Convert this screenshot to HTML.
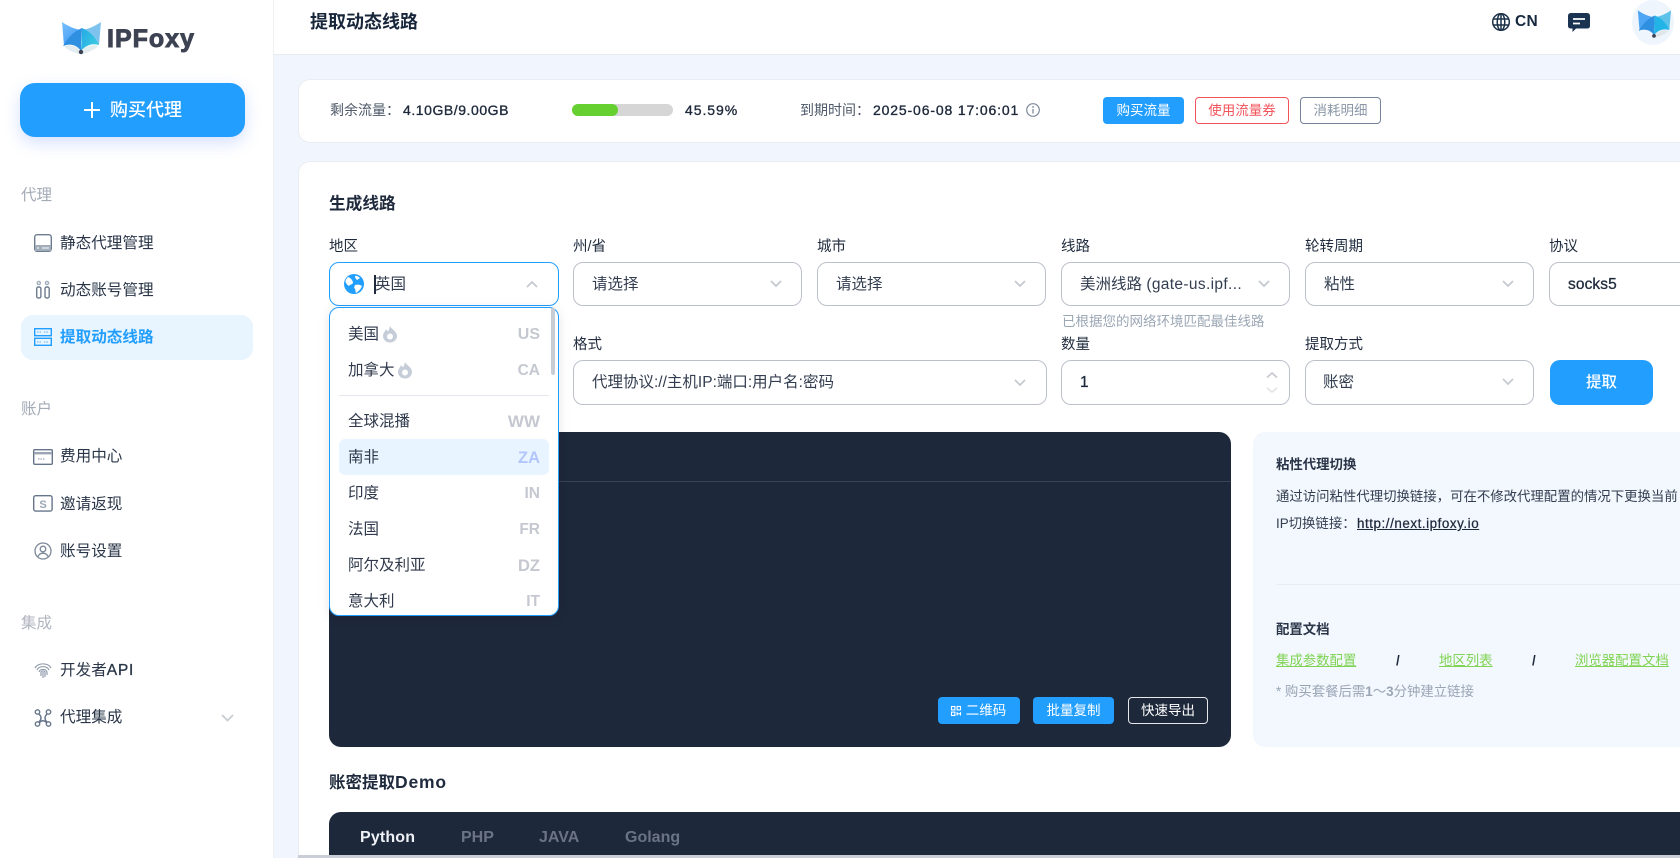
<!DOCTYPE html>
<html lang="zh-CN"><head><meta charset="utf-8"><title>IPFoxy</title>
<style>
*{box-sizing:border-box}
html,body{margin:0;padding:0;width:1680px;height:858px;overflow:hidden;background:#f1f6fe}
body{position:relative;font-family:"Liberation Sans","Noto Sans CJK SC",sans-serif;color:#1e293b}
.a{position:absolute}
.t{position:absolute;white-space:nowrap;line-height:20px;height:20px}
.nav{font-size:15.6px;color:#2a3648;left:60px}
.sec{font-size:15.5px;color:#a3abb6;left:21px}
.lab{font-size:14.5px;color:#1f2b3d}
.inp{position:absolute;background:#fff;border:1px solid #bcc0cb;border-radius:10px;height:44px;width:230px;top:262px}
.val{font-size:15.5px;color:#333e50}
.num{letter-spacing:.95px;font-weight:400;-webkit-text-stroke:.35px #1e293b;color:#1e293b;font-size:14px}
.btn{position:absolute;border-radius:4px;font-size:13.5px;text-align:center;line-height:25px}
.it{font-size:15.5px;color:#303a4c;left:348px}
.cd{font-size:15.5px;font-weight:700;color:#c5c8d0;right:1140px;text-align:right}
.pt{font-size:13.4px;color:#333e50}
.g{font-size:13.4px;color:#7fd453;text-decoration:underline}
svg{position:absolute;overflow:visible}
</style></head><body>

<!-- sidebar -->
<div class="a" style="left:0;top:0;width:274px;height:858px;background:#fff;border-right:1px solid #eef0f4"></div>

<svg style="left:61px;top:21px" width="40" height="34" viewBox="0 0 40 34">
<defs><linearGradient id="lg1" x1="0" y1="0" x2="0.6" y2="1"><stop offset="0" stop-color="#7cc0ff"/><stop offset="1" stop-color="#3f9af2"/></linearGradient>
<linearGradient id="lg2" x1="0" y1="0" x2="1" y2="0.6"><stop offset="0" stop-color="#23a8e8"/><stop offset="1" stop-color="#3bcbe0"/></linearGradient></defs>
<path d="M1 1C7 5 13 8 20 9L3 25Z" fill="url(#lg1)"/>
<path d="M40 1C34 5 28 8 21 9L38 24Z" fill="#7dc3ee"/>
<path d="M2 25C8 15 14 10 21 7L20 21L20 30C16 24 9 22 2 25Z" fill="#2f8fe0"/>
<path d="M21 7C28 10 34 15 38 24C31 22 25 24 20 30Z" fill="url(#lg2)"/>
<path d="M3 25C9 23 16 25 20 30C24 25 31 23 37 25C35 28 28 31 22 33H18C12 31 6 29 3 25Z" fill="#e3edf0"/>
<circle cx="20" cy="31" r="2.2" fill="#3a4252"/>
</svg>
<div class="t" style="left:107px;top:27px;font-size:25px;line-height:24px;height:24px;font-weight:700;color:#3d4352;letter-spacing:1px;-webkit-text-stroke:.9px #3d4352">IPFoxy</div>

<div class="a" style="left:20px;top:83px;width:225px;height:54px;background:#229eff;border-radius:15px;box-shadow:0 6px 16px rgba(70,120,255,.22)"></div>
<svg style="left:84px;top:102px" width="16" height="16"><path d="M8 0V16M0 8H16" stroke="#fff" stroke-width="2"/></svg>
<div class="t" style="left:110px;top:100px;font-size:18px;color:#fff;font-weight:500">购买代理</div>

<div class="t sec" style="top:186px">代理</div>
<svg style="left:34px;top:234px" width="18" height="18" fill="none"><rect x=".7" y=".7" width="16.6" height="16.6" rx="2.5" stroke="#6d7c90" stroke-width="1.4"/><rect x="1" y="11" width="16" height="6" fill="#a3aebb"/><path d="M3 14h2M8 14h7" stroke="#fff" stroke-width="1.1"/></svg>
<div class="t nav" style="top:234px">静态代理管理</div>
<svg style="left:36px;top:281px" width="14" height="18" fill="none" stroke="#6d7c90" stroke-width="1.4"><circle cx="2.8" cy="2" r="1.6" stroke="#a3aebb"/><circle cx="11" cy="2" r="1.6" stroke="#a3aebb"/><rect x=".7" y="6" width="4.2" height="11" rx="1.8"/><rect x="9" y="6" width="4.2" height="11" rx="1.8"/></svg>
<div class="t nav" style="top:281px">动态账号管理</div>
<div class="a" style="left:21px;top:315px;width:232px;height:45px;background:#e8f4fe;border-radius:12px"></div>
<svg style="left:34px;top:328px" width="18" height="18" fill="none"><rect x=".7" y=".7" width="16.6" height="7" stroke="#229eff" stroke-width="1.4"/><rect x=".7" y="10.3" width="16.6" height="7" stroke="#229eff" stroke-width="1.4"/><path d="M3 4h5M10 4h5M3 14h5M10 14h5" stroke="#7cc4fb" stroke-width="1.3" stroke-dasharray="1.5 1"/></svg>
<div class="t nav" style="top:328px;color:#229eff;font-weight:700">提取动态线路</div>

<div class="t sec" style="top:400px">账户</div>
<svg style="left:33px;top:449px" width="20" height="16" fill="none"><rect x=".7" y=".7" width="18.6" height="14.6" rx="1" stroke="#66758a" stroke-width="1.4"/><rect x="1" y="3" width="18" height="2.4" fill="#9aa6b5"/><path d="M5 10h7" stroke="#9aa6b5" stroke-width="1.2" stroke-dasharray="1.5 1"/></svg>
<div class="t nav" style="top:447px">费用中心</div>
<svg style="left:33px;top:495px" width="20" height="17" fill="none"><rect x=".7" y=".7" width="18.4" height="15.4" rx="2" stroke="#66758a" stroke-width="1.4"/><text x="10" y="13" font-size="11" font-weight="700" text-anchor="middle" fill="#9aa6b5" font-family="Liberation Sans">S</text></svg>
<div class="t nav" style="top:495px">邀请返现</div>
<svg style="left:34px;top:542px" width="18" height="18" fill="none" stroke="#7b8899" stroke-width="1.3"><circle cx="9" cy="9" r="8"/><circle cx="9" cy="7" r="2.8"/><path d="M3.8 14.8C5 12 7 11.2 9 11.2S13 12 14.2 14.8"/></svg>
<div class="t nav" style="top:542px">账号设置</div>

<div class="t sec" style="top:614px;color:#b0b6c0">集成</div>
<svg style="left:34px;top:661px" width="18" height="18" fill="none" stroke="#8995a5" stroke-width="1.1"><path d="M1 7C4 1.500 14 1.500 17 7"/><path d="M3 9C5 4.500 13 4.500 15 9"/><path d="M5 11C6 7.500 12 7.500 13 11V14"/><path d="M7 15V11C7.500 9.500 10.500 9.500 11 11V16"/><path d="M9 11V17"/></svg>
<div class="t nav" style="top:661px">开发者<span style="-webkit-text-stroke:.3px #2a3648;letter-spacing:.7px">API</span></div>
<svg style="left:34px;top:709px" width="18" height="18" fill="none" stroke="#66758a" stroke-width="1.4"><circle cx="3.500" cy="3" r="2.200"/><circle cx="14.500" cy="3" r="2.200"/><circle cx="3.500" cy="15" r="2.200"/><circle cx="14.500" cy="15" r="2.200"/><path d="M5 5Q9 9 5 13M13 5Q9 9 13 13M5.500 13.500Q9 10 12.500 13.500"/></svg>
<div class="t nav" style="top:708px">代理集成</div>
<svg style="left:221px;top:714px" width="13" height="8" fill="none"><path d="M1 1L6.500 6.500L12 1" stroke="#c8ccd3" stroke-width="1.800"/></svg>

<!-- topbar -->
<div class="a" style="left:274px;top:0;width:1406px;height:55px;background:#fff;border-bottom:1px solid #e8ebf0"></div>
<div class="t" style="left:310px;top:12px;font-size:18px;font-weight:700;color:#17263a">提取动态线路</div>
<svg style="left:1492px;top:13px" width="18" height="18" fill="none" stroke="#1b3048" stroke-width="1.500"><circle cx="9" cy="9" r="8.300"/><ellipse cx="9" cy="9" rx="3.800" ry="8.300"/><path d="M1 6H17M1 12H17M9 .7V17.300"/></svg>
<div class="t" style="left:1515px;top:12px;font-size:15.500px;font-weight:700;color:#16293f;letter-spacing:.3px">CN</div>
<svg style="left:1568px;top:13px" width="22" height="19"><path d="M3 0H19Q22 0 22 3V13Q22 15.500 19 15.500H8L4.500 19V15.500H3Q0 15.500 0 13V3Q0 0 3 0Z" fill="#1a3350"/><path d="M5 6H17M5 10.500H12" stroke="#fff" stroke-width="1.800"/></svg>
<div class="a" style="left:1632px;top:0;width:42px;height:45px;background:#eef5fd;border-radius:50%"></div>
<svg style="left:1637px;top:9px" width="34" height="30" viewBox="0 0 40 34">
<path d="M1 1C7 5 13 8 20 9L3 25Z" fill="#4ea6f5"/>
<path d="M40 1C34 5 28 8 21 9L38 24Z" fill="#5cc2ea"/>
<path d="M2 25C8 15 14 10 21 7L20 30C16 24 9 22 2 25Z" fill="#2f8fe0"/>
<path d="M21 7C28 10 34 15 38 24C31 22 25 24 20 30Z" fill="#22b4e6"/>
<path d="M22 29C26 25 31 23 37 25C34 29 28 31 22 33Z" fill="#dfe7ea"/>
<circle cx="20" cy="31" r="2.200" fill="#3a4252"/>
</svg>

<!-- info card -->
<div class="a" style="left:298px;top:79px;width:1400px;height:64px;background:#fff;border:1px solid #e9edf2;border-radius:12px"></div>
<div class="t" style="left:330px;top:100px;font-size:14px;color:#4d5868">剩余流量：</div>
<div class="t num" style="left:403px;top:100px;letter-spacing:.55px">4.10GB/9.00GB</div>
<div class="a" style="left:572px;top:104px;width:101px;height:12px;background:#d6d6d6;border-radius:6px"></div>
<div class="a" style="left:572px;top:104px;width:46px;height:12px;background:#67d031;border-radius:6px"></div>
<div class="t num" style="left:685px;top:100px">45.59%</div>
<div class="t" style="left:800px;top:100px;font-size:14px;color:#4d5868">到期时间：</div>
<div class="t num" style="left:873px;top:100px;letter-spacing:.85px">2025-06-08 17:06:01</div>
<svg style="left:1026px;top:103px" width="14" height="14" fill="none"><circle cx="7" cy="7" r="6.300" stroke="#7d8a9a" stroke-width="1.200"/><path d="M7 6V10.500" stroke="#7d8a9a" stroke-width="1.300"/><circle cx="7" cy="4" r=".9" fill="#7d8a9a"/></svg>
<div class="btn" style="left:1103px;top:97px;width:81px;height:27px;background:#229eff;color:#fff;line-height:27px">购买流量</div>
<div class="btn" style="left:1195px;top:97px;width:94px;height:27px;border:1px solid #f2545b;color:#f2545b">使用流量券</div>
<div class="btn" style="left:1300px;top:97px;width:81px;height:27px;border:1px solid #76849a;color:#8c98a8">消耗明细</div>

<!-- main card -->
<div class="a" style="left:298px;top:161px;width:1400px;height:720px;background:#fff;border:1px solid #e9edf2;border-radius:12px"></div>
<div class="t" style="left:329px;top:194px;font-size:16.700px;font-weight:600;color:#1f2b3d">生成线路</div>

<div class="t lab" style="left:329px;top:237px">地区</div>
<div class="t lab" style="left:573px;top:237px">州/省</div>
<div class="t lab" style="left:817px;top:237px">城市</div>
<div class="t lab" style="left:1061px;top:237px">线路</div>
<div class="t lab" style="left:1305px;top:237px">轮转周期</div>
<div class="t lab" style="left:1549px;top:237px">协议</div>

<div class="inp" style="left:329px;border-color:#229eff"></div>
<svg style="left:344px;top:274px" width="20" height="20"><circle cx="10" cy="10" r="10" fill="#229eff"/><path d="M4 3C7 4 8 6 9 8C9 11 6 10 5 12C3 11 1 8 1.500 7C2 5 3 4 4 3ZM11 11C14 10 17 11 18 12C17 15 14 18 12 19C11 17 12 15 10 14ZM11 2C13 1.500 15 3 16 4L13 6C12 5 11 4 11 2Z" fill="#fff"/></svg>
<div class="a" style="left:374px;top:275px;width:2px;height:19px;background:#1f2b3d"></div>
<div class="t val" style="left:375px;top:275px">英国</div>
<svg style="left:526px;top:281px" width="12" height="7" fill="none"><path d="M1 6L6 1L11 6" stroke="#c4c8cf" stroke-width="1.700"/></svg>

<div class="inp" style="left:573px;width:229px"></div>
<div class="t val" style="left:592px;top:275px">请选择</div>
<svg style="left:770px;top:280px" width="12" height="7" fill="none"><path d="M1 1L6 6L11 1" stroke="#c4c8cf" stroke-width="1.700"/></svg>

<div class="inp" style="left:817px;width:229px"></div>
<div class="t val" style="left:836px;top:275px">请选择</div>
<svg style="left:1014px;top:280px" width="12" height="7" fill="none"><path d="M1 1L6 6L11 1" stroke="#c4c8cf" stroke-width="1.700"/></svg>

<div class="inp" style="left:1061px;width:229px"></div>
<div class="t val" style="left:1080px;top:275px">美洲线路 <span style="letter-spacing:.35px">(gate-us.ipf...</span></div>
<svg style="left:1258px;top:280px" width="12" height="7" fill="none"><path d="M1 1L6 6L11 1" stroke="#c4c8cf" stroke-width="1.700"/></svg>

<div class="inp" style="left:1305px;width:229px"></div>
<div class="t val" style="left:1324px;top:275px">粘性</div>
<svg style="left:1502px;top:280px" width="12" height="7" fill="none"><path d="M1 1L6 6L11 1" stroke="#c4c8cf" stroke-width="1.700"/></svg>

<div class="inp" style="left:1549px;width:229px"></div>
<div class="t val" style="left:1568px;top:275px;color:#1f2b3d;-webkit-text-stroke:.3px #1f2b3d;letter-spacing:.1px">socks5</div>

<div class="t" style="left:1062px;top:312px;font-size:13.500px;color:#9ba7b5">已根据您的网络环境匹配最佳线路</div>

<div class="t lab" style="left:573px;top:335px">格式</div>
<div class="t lab" style="left:1061px;top:335px">数量</div>
<div class="t lab" style="left:1305px;top:335px">提取方式</div>

<div class="inp" style="left:573px;top:360px;width:474px;height:45px"></div>
<div class="t val" style="left:592px;top:373px">代理协议://主机IP:端口:用户名:密码</div>
<svg style="left:1014px;top:379px" width="12" height="7" fill="none"><path d="M1 1L6 6L11 1" stroke="#c4c8cf" stroke-width="1.700"/></svg>

<div class="inp" style="left:1061px;top:360px;width:229px;height:45px"></div>
<div class="t val" style="left:1080px;top:373px;color:#1f2b3d;-webkit-text-stroke:.3px #1f2b3d">1</div>
<svg style="left:1266px;top:372px" width="12" height="6" fill="none"><path d="M1 5.500L6 1L11 5.500" stroke="#c4c8cf" stroke-width="1.600"/></svg>
<svg style="left:1266px;top:387px" width="12" height="6" fill="none"><path d="M1 1L6 5L11 1" stroke="#e0e2e6" stroke-width="1.600"/></svg>

<div class="inp" style="left:1305px;top:360px;width:229px;height:45px"></div>
<div class="t val" style="left:1323px;top:373px">账密</div>
<svg style="left:1502px;top:378px" width="12" height="7" fill="none"><path d="M1 1L6 6L11 1" stroke="#c4c8cf" stroke-width="1.700"/></svg>

<div class="a" style="left:1550px;top:360px;width:103px;height:45px;background:#229eff;border-radius:10px;color:#fff;font-size:15.500px;font-weight:500;text-align:center;line-height:46px">提取</div>

<!-- dark panel -->
<div class="a" style="left:329px;top:432px;width:902px;height:315px;background:#1e283b;border-radius:12px"></div>
<div class="a" style="left:329px;top:481px;width:902px;height:1px;background:#3a4354"></div>
<div class="btn" style="left:938px;top:697px;width:82px;height:27px;background:#229eff;color:#fff;line-height:28px;padding-left:14px">二维码</div>
<svg style="left:951px;top:706px" width="10" height="10" fill="none" stroke="#fff" stroke-width="1.100"><rect x=".5" y=".5" width="3.400" height="3.400"/><rect x="6.100" y=".5" width="3.400" height="3.400"/><rect x=".5" y="6.100" width="3.400" height="3.400"/><path d="M6.100 6.100V9.500M9.500 6.100V9.500M6.100 7.800H9.500"/></svg>
<div class="btn" style="left:1033px;top:697px;width:81px;height:27px;background:#229eff;color:#fff;line-height:28px">批量复制</div>
<div class="btn" style="left:1128px;top:697px;width:80px;height:27px;border:1px solid #e6e8ec;color:#fff;line-height:26px">快速导出</div>

<!-- right panel -->
<div class="a" style="left:1253px;top:432px;width:440px;height:315px;background:#f3f7fe;border-radius:12px"></div>
<div class="t pt" style="left:1276px;top:455px;font-weight:600;color:#2a3648">粘性代理切换</div>
<div class="t pt" style="left:1276px;top:487px">通过访问粘性代理切换链接，可在不修改代理配置的情况下更换当前</div>
<div class="t pt" style="left:1276px;top:514px">IP切换链接：</div>
<div class="t pt" style="left:1357px;top:514px;color:#1f2b3d;-webkit-text-stroke:.25px #1f2b3d;text-decoration:underline;letter-spacing:.55px">http://next.ipfoxy.io</div>
<div class="a" style="left:1276px;top:584px;width:404px;height:1px;background:#e9ecf1"></div>
<div class="t pt" style="left:1276px;top:620px;font-weight:600;color:#2a3648">配置文档</div>
<div class="t g" style="left:1276px;top:651px">集成参数配置</div>
<div class="t pt" style="left:1396px;top:651px;font-weight:600;color:#1f2b3d">/</div>
<div class="t g" style="left:1439px;top:651px">地区列表</div>
<div class="t pt" style="left:1532px;top:651px;font-weight:600;color:#1f2b3d">/</div>
<div class="t g" style="left:1575px;top:651px">浏览器配置文档</div>
<div class="t" style="left:1276px;top:682px;font-size:13.400px;color:#9aa5b4">* 购买套餐后需<b style="font-weight:700">1</b>～<b style="font-weight:700">3</b>分钟建立链接</div>

<!-- demo -->
<div class="t" style="left:329px;top:772px;font-size:16.500px;font-weight:600;color:#1f2b3d">账密提取<span style="font-size:17.500px;letter-spacing:.8px">Demo</span></div>
<div class="a" style="left:329px;top:812px;width:1370px;height:60px;background:#1e283b;border-radius:12px"></div>
<div class="t" style="left:360px;top:828px;font-size:16px;font-weight:700;color:#eef1f5;letter-spacing:.15px">Python</div>
<div class="t" style="left:461px;top:828px;font-size:16px;font-weight:600;color:#6b7485">PHP</div>
<div class="t" style="left:539px;top:828px;font-size:16px;font-weight:600;color:#6b7485">JAVA</div>
<div class="t" style="left:625px;top:828px;font-size:16px;font-weight:600;color:#6b7485">Golang</div>

<!-- dropdown -->
<div class="a" style="left:329px;top:307px;width:230px;height:309px;background:#fff;border:1px solid #229eff;border-radius:10px;box-shadow:0 2px 12px rgba(0,0,0,.1)"></div>
<div class="a" style="left:551px;top:308px;width:4px;height:67px;background:#c8ccd4;border-radius:2px"></div>
<div class="t it" style="top:325px">美国</div>
<svg style="left:383px;top:326px" width="14" height="16"><path d="M7 0C8 3 14 5 14 10A7 6.500 0 0 1 0 10C0 7 2 6 3 3C4 5 5 5 5.500 5C6 3.500 6.500 2 7 0Z" fill="#c5cdd8"/><circle cx="7" cy="10.500" r="3" fill="#fff"/></svg>
<div class="t cd" style="top:325px;font-size:16px">US</div>
<div class="t it" style="top:361px">加拿大</div>
<svg style="left:398px;top:362px" width="14" height="16"><path d="M7 0C8 3 14 5 14 10A7 6.500 0 0 1 0 10C0 7 2 6 3 3C4 5 5 5 5.500 5C6 3.500 6.500 2 7 0Z" fill="#c5cdd8"/><circle cx="7" cy="10.500" r="3" fill="#fff"/></svg>
<div class="t cd" style="top:361px">CA</div>
<div class="a" style="left:339px;top:395px;width:210px;height:1px;background:#e4e7ed"></div>
<div class="t it" style="top:412px">全球混播</div>
<div class="t cd" style="top:412px;font-size:17px">WW</div>
<div class="a" style="left:339px;top:439px;width:210px;height:36px;background:#e8f4ff;border-radius:6px"></div>
<div class="t it" style="top:448px">南非</div>
<div class="t cd" style="top:448px;color:#b3c6fb;font-size:16.500px">ZA</div>
<div class="t it" style="top:484px">印度</div>
<div class="t cd" style="top:484px">IN</div>
<div class="t it" style="top:520px">法国</div>
<div class="t cd" style="top:520px">FR</div>
<div class="t it" style="top:556px">阿尔及利亚</div>
<div class="t cd" style="top:556px;font-size:16.500px">DZ</div>
<div class="t it" style="top:592px">意大利</div>
<div class="t cd" style="top:592px">IT</div>

<!-- scrollbar -->
<div class="a" style="left:298px;top:855px;width:1382px;height:3px;background:#c9cdd8"></div>
</body></html>
